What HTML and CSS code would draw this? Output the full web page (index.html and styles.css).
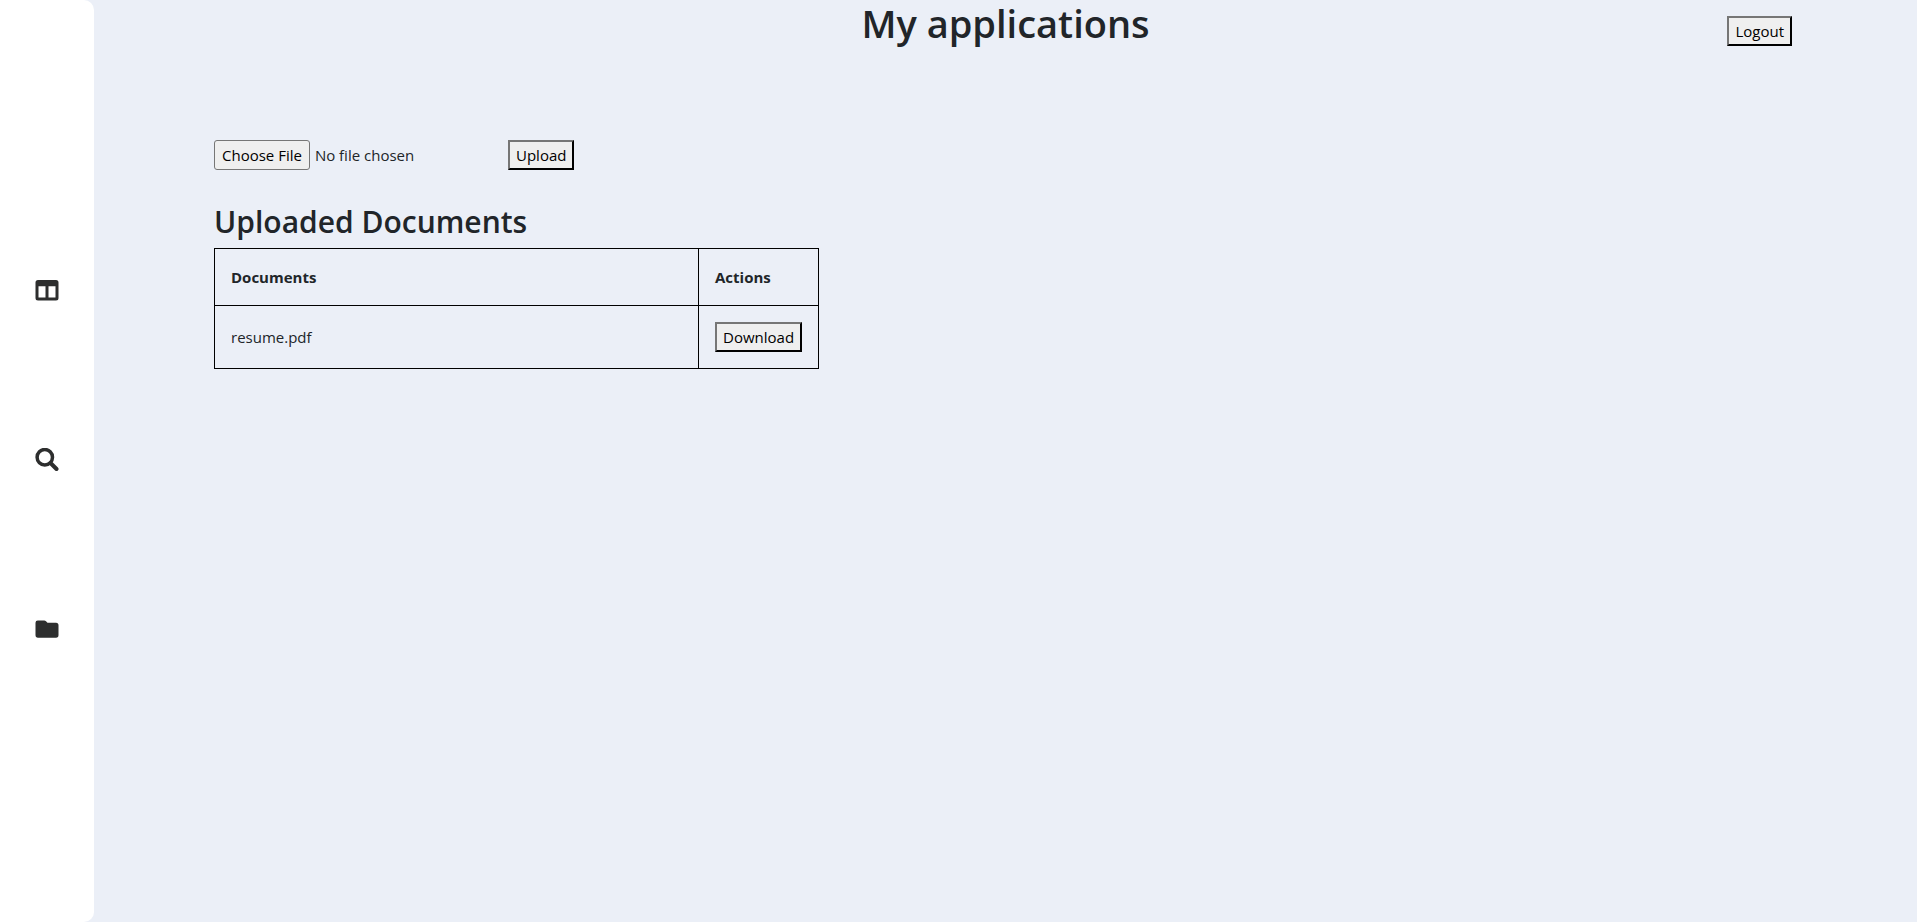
FILE: index.html
```html
<!DOCTYPE html>
<html lang="en">
<head>
<meta charset="utf-8">
<title>My applications</title>
<link rel="stylesheet" href="styles.css">
</head>
<body>
<div class="app">
  <nav class="sidebar" aria-label="Main">
    <a class="nav-link" href="#board" aria-label="Board">
      <svg class="icon" viewBox="0 0 24 24"><path fill-rule="evenodd" d="M3 2H21Q23.500 2 23.500 4.500V20Q23.500 22.500 21 22.500H3Q.5 22.500 .5 20V4.500Q.5 2 3 2ZM3.500 8.200V19.600H10.500V8.200ZM13.500 8.200V19.600H20.500V8.200Z"/></svg>
    </a>
    <a class="nav-link" href="#search" aria-label="Search">
      <svg class="icon" viewBox="0 0 24 24"><circle class="lens" cx="9.800" cy="9.200" r="7.700"/><path class="handle" d="M15.500 15L21.500 21"/></svg>
    </a>
    <a class="nav-link" href="#documents" aria-label="Documents">
      <svg class="icon" viewBox="0 0 24 24"><path d="M2.800 2.500H9.200Q10.300 2.500 11 3.300L12.500 4.800H21Q23.500 4.800 23.500 7.300V17Q23.500 19.700 21 19.700H3Q.5 19.700 .5 17V4.800Q.5 2.500 2.800 2.500Z"/></svg>
    </a>
  </nav>
  <main class="main">
    <header class="header">
      <h1 class="title">My applications</h1>
      <button class="button logout" type="button">Logout</button>
    </header>
    <section class="content">
      <form class="upload">
        <input class="file" type="file" aria-label="Document to upload">
        <button class="button" type="button">Upload</button>
      </form>
      <h2 class="subtitle">Uploaded Documents</h2>
      <table class="documents">
        <thead>
          <tr><th class="name">Documents</th><th>Actions</th></tr>
        </thead>
        <tbody>
          <tr><td>resume.pdf</td><td><button class="button" type="button">Download</button></td></tr>
        </tbody>
      </table>
    </section>
  </main>
</div>
</body>
</html>
```
FILE: styles.css
```css
* {
  box-sizing: border-box;
}

body {
  margin: 0;
  background: #ebeff7;
  color: #212529;
  font-family: "Segoe UI", "Open Sans", "Noto Sans", sans-serif;
  font-size: 15px;
  line-height: 24px;
}

.app {
  display: flex;
  min-height: 100vh;
}

.sidebar {
  display: flex;
  flex: none;
  flex-direction: column;
  align-items: center;
  justify-content: center;
  gap: 146px;
  width: 94px;
  padding: 0 1px 3px 0;
  background: #fff;
  border-radius: 0 10px 10px 0;
}

.nav-link {
  display: block;
  height: 24px;
}

.icon {
  display: block;
  width: 24px;
  height: 24px;
  fill: #2d2e2e;
}

.lens,
.handle {
  fill: none;
  stroke: #2d2e2e;
  stroke-width: 3.5;
}

.handle {
  stroke-width: 4;
  stroke-linecap: round;
}

.main {
  flex: 1;
}

.header {
  display: grid;
  grid-template-columns: 1fr auto 1fr;
  align-items: start;
}

.title {
  grid-column: 2;
  margin: 0;
  font-size: 38px;
  font-weight: 600;
  line-height: 46px;
}

.logout {
  justify-self: end;
  margin: 16px 125px 0 0;
}

.button {
  height: 30px;
  padding: 0 6px;
  border: 2px outset #212529;
  border-color: #767676 #212529 #212529 #767676;
  background: #efefef;
  color: #000;
  font: inherit;
  line-height: 24px;
}

.content {
  padding: 94px 120px 0;
}

.upload {
  display: flex;
}

.file {
  width: 294px;
  height: 30px;
  font: inherit;
}

.file::file-selector-button {
  height: 30px;
  margin-inline-end: 5px;
  padding: 1px 7px;
  border: 1px solid #767676;
  border-radius: 3px;
  background: #efefef;
  color: #000;
  font: inherit;
}

.subtitle {
  margin: 32px 0 6px;
  font-size: 30px;
  font-weight: 600;
  line-height: 40px;
}

.documents {
  border-collapse: collapse;
}

.documents th,
.documents td {
  padding: 16px;
  border: 1px solid #000;
  text-align: left;
}

.documents th {
  font-weight: 700;
}

.documents .name {
  width: 484px;
}

.documents .button {
  display: block;
}
```
